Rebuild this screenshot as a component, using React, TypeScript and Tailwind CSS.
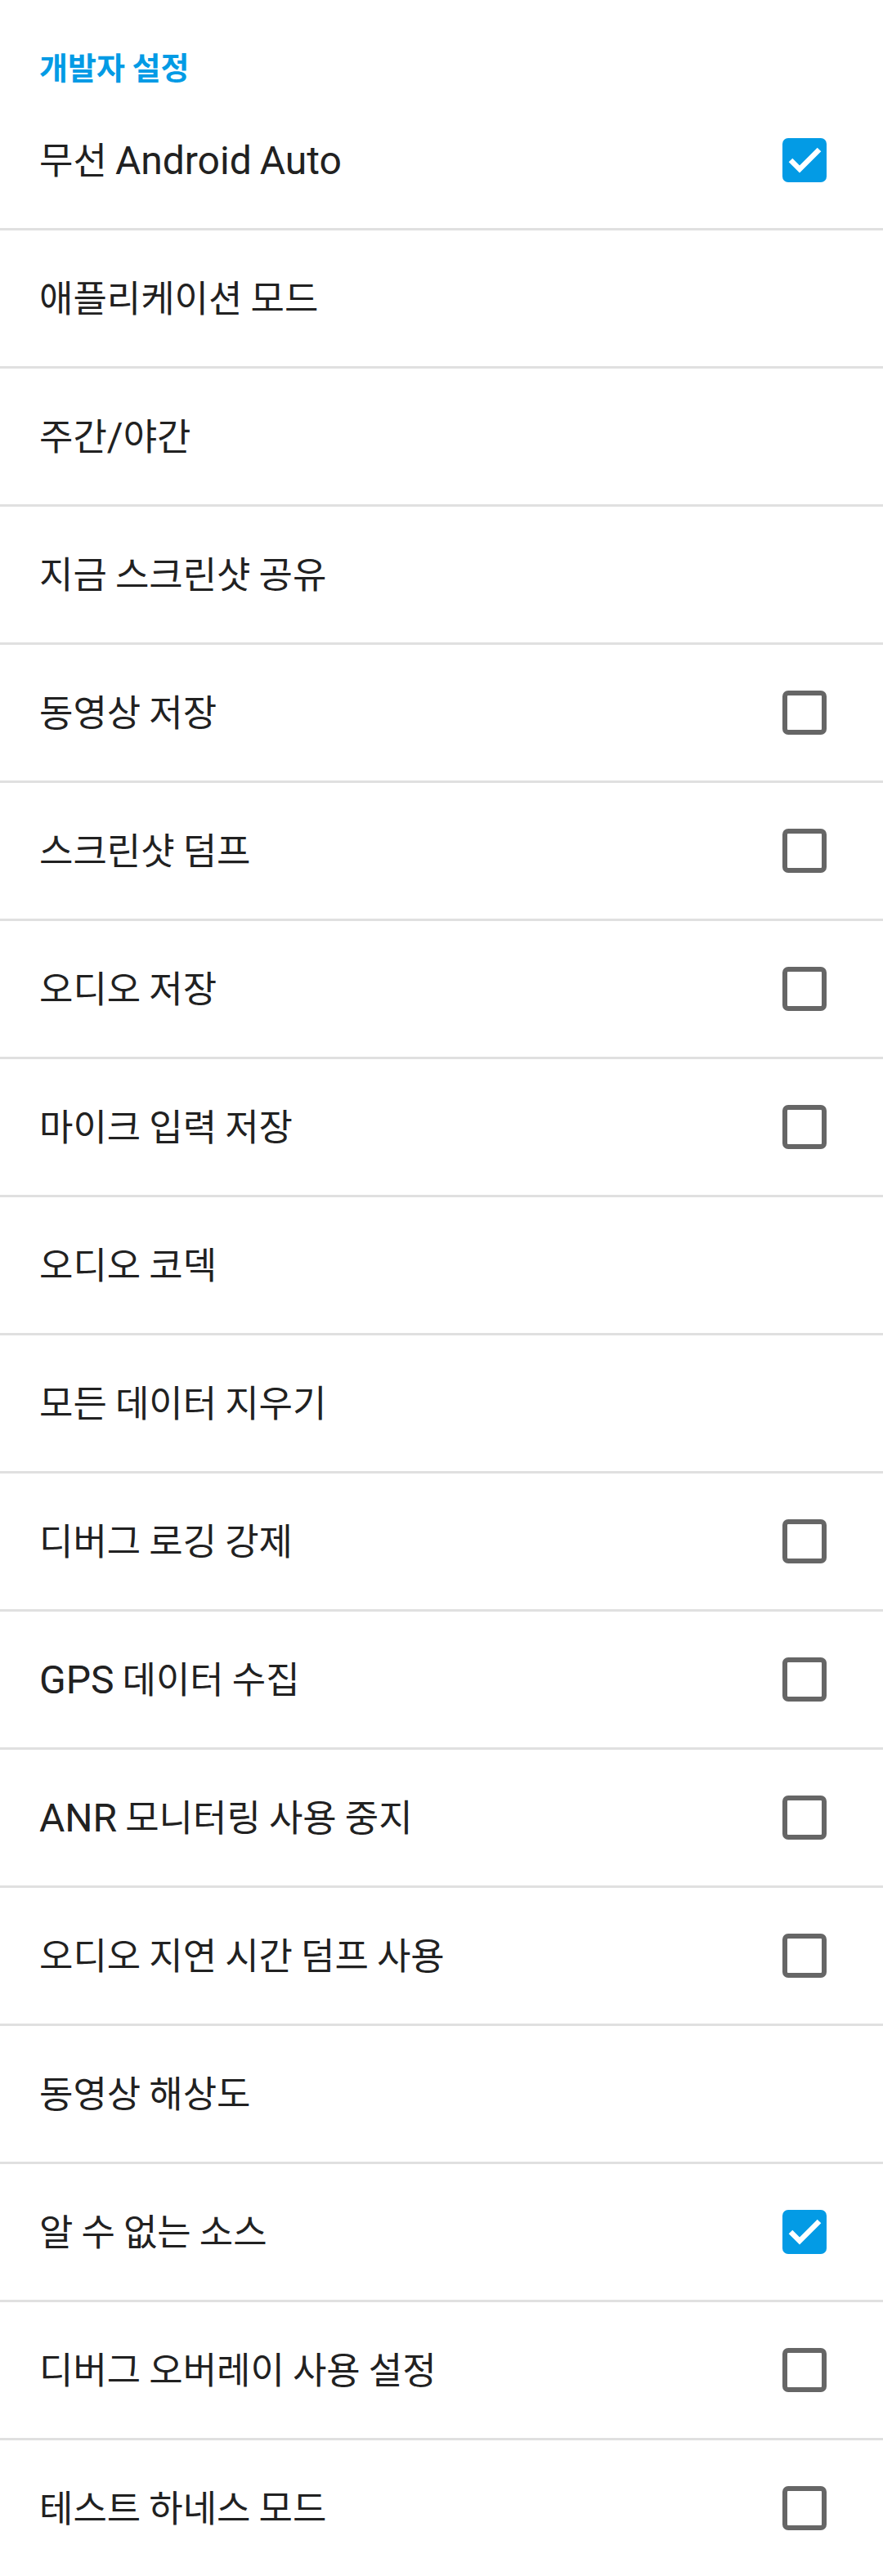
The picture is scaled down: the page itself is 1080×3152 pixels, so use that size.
import React from "react";

type Item = { label: string; check?: boolean | null };

const items: Item[] = [
  { label: "무선 Android Auto", check: true },
  { label: "애플리케이션 모드" },
  { label: "주간/야간" },
  { label: "지금 스크린샷 공유" },
  { label: "동영상 저장", check: false },
  { label: "스크린샷 덤프", check: false },
  { label: "오디오 저장", check: false },
  { label: "마이크 입력 저장", check: false },
  { label: "오디오 코덱" },
  { label: "모든 데이터 지우기" },
  { label: "디버그 로깅 강제", check: false },
  { label: "GPS 데이터 수집", check: false },
  { label: "ANR 모니터링 사용 중지", check: false },
  { label: "오디오 지연 시간 덤프 사용", check: false },
  { label: "동영상 해상도" },
  { label: "알 수 없는 소스", check: true },
  { label: "디버그 오버레이 사용 설정", check: false },
  { label: "테스트 하네스 모드", check: false },
];

function Label({ text }: { text: string }) {
  const parts = text.split(/([A-Za-z\/]+)/).filter((p) => p.length > 0);
  return (
    <span className="whitespace-pre text-[#212121] leading-[48px] pt-2">
      {parts.map((p, i) =>
        /^[A-Za-z\/]+$/.test(p) ? (
          <span key={i} className="text-[48px] font-['Roboto',sans-serif]">
            {p}
          </span>
        ) : (
          <span key={i} className="text-[45px] font-['Noto_Sans_CJK_KR',sans-serif]">
            {p}
          </span>
        )
      )}
    </span>
  );
}

function CheckBox({ checked }: { checked: boolean }) {
  if (checked) {
    return (
      <div className="w-[54px] h-[54px] rounded-[7px] bg-[#039be5] flex items-center justify-center shrink-0">
        <svg width="54" height="54" viewBox="0 0 54 54">
          <polyline
            points="10,27 21,38 45,14"
            fill="none"
            stroke="#ffffff"
            strokeWidth="6.5"
            strokeLinecap="butt"
            strokeLinejoin="miter"
          />
        </svg>
      </div>
    );
  }
  return (
    <div className="w-[54px] h-[54px] rounded-[7px] border-[6px] border-[#666666] bg-white shrink-0" />
  );
}

export default function App() {
  return (
    <div className="w-[1080px] h-[3152px] bg-white overflow-hidden font-['Noto_Sans_CJK_KR',sans-serif]">
      <div className="h-[113px] pl-12 pt-[62px]">
        <span className="text-[38px] leading-[38px] font-bold text-[#039be5] font-['Noto_Sans_CJK_KR',sans-serif]">
          개발자 설정
        </span>
      </div>
      <div className="flex flex-col">
        {items.map((it, i) => (
          <div
            key={i}
            className={
              i < items.length - 1
                ? "h-[169px] border-b-[3px] border-[#e0e0e0] flex items-center justify-between pl-12 pr-[69px]"
                : "h-[166px] flex items-center justify-between pl-12 pr-[69px]"
            }
          >
            <Label text={it.label} />
            {it.check === true || it.check === false ? <CheckBox checked={it.check} /> : null}
          </div>
        ))}
      </div>
    </div>
  );
}
